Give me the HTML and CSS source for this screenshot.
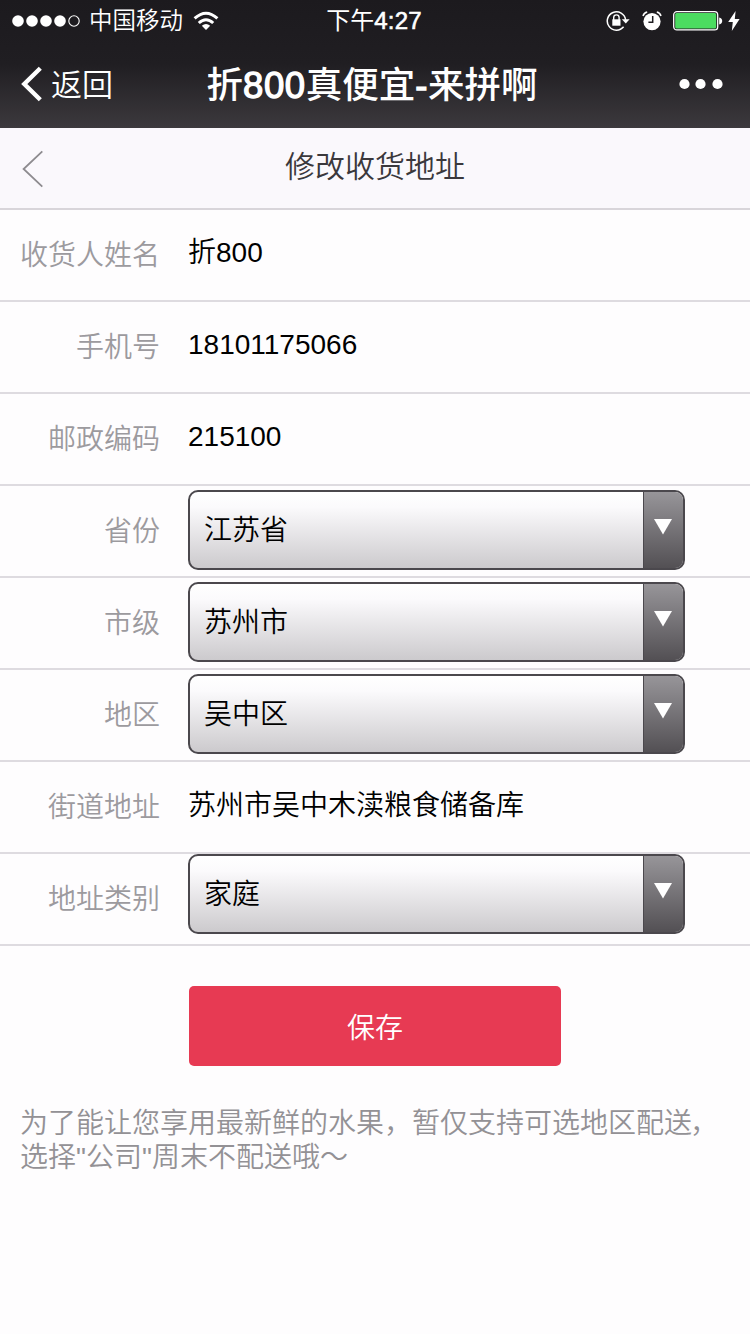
FILE: index.html
```html
<!DOCTYPE html>
<html lang="zh-CN">
<head>
<meta charset="utf-8">
<title>修改收货地址</title>
<link rel="stylesheet" href="styles.css">
</head>
<body>
<div class="top">
  <div class="status">
    <div class="carrier">
      <svg class="signal" width="68" height="14" viewBox="0 0 68 14">
        <g fill="#fff"><circle cx="6" cy="7" r="5.8"/><circle cx="20" cy="7" r="5.8"/><circle cx="34" cy="7" r="5.8"/><circle cx="48" cy="7" r="5.8"/></g>
        <circle cx="62" cy="7" r="5.2" fill="none" stroke="#fff" stroke-width="1.1"/>
      </svg>
      <span class="carrier-name">中国移动</span>
      <svg class="wifi" width="26" height="20" viewBox="0 0 26 20">
        <g fill="none" stroke="#fff" stroke-width="3"><path d="M1.6 7.4 Q13 -3 24.4 7.4"/><path d="M5.8 12 Q13 5.4 20.2 12"/></g>
        <path d="M13 19 L8.8 14.8 Q13 11.4 17.2 14.8Z" fill="#fff"/>
      </svg>
    </div>
    <div class="clock">下午<span class="clock-num">4:27</span></div>
    <div class="indicators">
      <svg width="24" height="22" viewBox="0 0 24 22">
        <path d="M19.6 9.8 A9.2 9.2 0 1 0 17.6 16.8" fill="none" stroke="#fff" stroke-width="1.5"/>
        <path d="M15.8 9.2h7.8l-3.8 4.4z" fill="#fff"/>
        <path d="M6.3 9.3h8.2v6.4H6.3z" fill="#fff"/>
        <path d="M7.7 10V7.6a2.7 2.7 0 0 1 5.4 0V10" fill="none" stroke="#fff" stroke-width="1.4"/>
      </svg>
      <svg class="alarm" width="20" height="20" viewBox="0 0 20 20">
        <circle cx="10" cy="10.6" r="8.6" fill="#fff"/>
        <path d="M1 5 Q2 1.8 5.2 1M19 5 Q18 1.8 14.8 1" fill="none" stroke="#fff" stroke-width="1.5"/>
        <path d="M10.7 5v6.2H6.4" fill="none" stroke="#1e1c20" stroke-width="1.5"/>
      </svg>
      <svg class="battery" width="50" height="20" viewBox="0 0 50 20">
        <rect x=".7" y=".7" width="44" height="18.2" rx="3.2" fill="none" stroke="#fff" stroke-width="1.3"/>
        <rect x="2.2" y="2.1" width="41" height="15.4" rx="1.5" fill="#4bdc60"/>
        <path d="M46.2 6.4q3 .6 3 3.5t-3 3.5z" fill="#fff"/>
      </svg>
      <svg class="bolt" width="12" height="20" viewBox="0 0 12 20"><path d="M7.6 0 L.2 11h4.6L3.8 20 11.6 8H6.8z" fill="#fff"/></svg>
    </div>
  </div>
  <div class="nav">
    <div class="back">
      <svg width="22" height="36" viewBox="0 0 22 36"><path d="M19.3 2.3 L3.3 18 L19.3 33.7" fill="none" stroke="#fff" stroke-width="4.4"/></svg>
      <span class="back-text">返回</span>
    </div>
    <div class="nav-title">折<span class="title-num">800</span>真便宜<span class="title-num">-</span>来拼啊</div>
    <svg class="more" width="44" height="12" viewBox="0 0 44 12" fill="#fff"><circle cx="5.5" cy="6" r="5.1"/><circle cx="21.5" cy="6" r="5.1"/><circle cx="38.5" cy="6" r="5.1"/></svg>
  </div>
</div>
<div class="heading">
  <svg class="heading-back" width="22" height="38" viewBox="0 0 22 38"><path d="M20.3 1.4 L1.6 19 L20.3 36.6" fill="none" stroke="#8d8b8f" stroke-width="1.8"/></svg>
  <h1 class="heading-title">修改收货地址</h1>
</div>
<div class="form">
  <div class="row"><div class="label">收货人姓名</div><div class="value">折800</div></div>
  <div class="row"><div class="label">手机号</div><div class="value">18101175066</div></div>
  <div class="row"><div class="label">邮政编码</div><div class="value">215100</div></div>
  <div class="row"><div class="label">省份</div><div class="select"><span class="select-text">江苏省</span><span class="select-arrow"><svg width="18" height="16" viewBox="0 0 18 16"><path d="M0 0h18L9 15.6z" fill="#fff"/></svg></span></div></div>
  <div class="row"><div class="label">市级</div><div class="select"><span class="select-text">苏州市</span><span class="select-arrow"><svg width="18" height="16" viewBox="0 0 18 16"><path d="M0 0h18L9 15.6z" fill="#fff"/></svg></span></div></div>
  <div class="row"><div class="label">地区</div><div class="select"><span class="select-text">吴中区</span><span class="select-arrow"><svg width="18" height="16" viewBox="0 0 18 16"><path d="M0 0h18L9 15.6z" fill="#fff"/></svg></span></div></div>
  <div class="row"><div class="label">街道地址</div><div class="value value-address">苏州市吴中木渎粮食储备库</div></div>
  <div class="row"><div class="label">地址类别</div><div class="select select-flush"><span class="select-text">家庭</span><span class="select-arrow"><svg width="18" height="16" viewBox="0 0 18 16"><path d="M0 0h18L9 15.6z" fill="#fff"/></svg></span></div></div>
</div>
<button class="save">保存</button>
<p class="note">为了能让您享用最新鲜的水果，暂仅支持可选地区配送<span class="comma">，</span><br>选择"公司"周末不配送哦～</p>
</body>
</html>
```
FILE: styles.css
```css
* { box-sizing: border-box; }
body {
  margin: 0;
  height: 1334px;
  overflow: hidden;
  background: #fefdfe;
  font-family: "Liberation Sans", "Noto Sans CJK SC", sans-serif;
  font-weight: 350;
  font-size: 28px;
  color: #000;
}
svg { display: block; flex: none; }
.top {
  height: 128px;
  color: #fff;
  background: linear-gradient(#1c1a1e 0, #201e22 50%, #3c393d 100%);
}
.status {
  height: 40px;
  display: grid;
  grid-template-columns: 1fr auto 1fr;
  align-items: center;
  padding: 0 10px 0 12px;
}
.carrier { display: flex; align-items: center; }
.carrier-name { margin-left: 9px; padding-top: 1px; font-size: 23.5px; line-height: 40px; }
.wifi { margin-left: 10px; }
.clock { padding: 1px 4px 0 0; font-size: 24px; font-weight: 400; line-height: 40px; }
.clock-num { font-weight: 400; font-size: 24px; letter-spacing: .2px; -webkit-text-stroke: .6px #fff; }
.indicators { display: flex; align-items: center; justify-content: flex-end; }
.alarm { margin-left: 12px; }
.battery { margin-left: 11px; }
.bolt { margin-left: 5px; }
.nav {
  height: 88px;
  display: grid;
  grid-template-columns: 1fr auto 1fr;
  align-items: center;
  padding: 0 27px 0 21px;
}
.back { display: flex; align-items: center; gap: 8px; font-size: 31px; }
.back-text { line-height: 44px; padding-top: 4px; }
.nav-title { padding-top: 3px; font-size: 36.5px; line-height: 85px; font-weight: 500; }
.title-num { font-weight: 400; letter-spacing: .6px; -webkit-text-stroke: 1.3px #fff; }
.more { justify-self: end; }
.heading {
  height: 82px;
  display: grid;
  grid-template-columns: 1fr auto 1fr;
  align-items: center;
  padding: 0 22px;
  background: #faf8fc;
  border-bottom: 2px solid #d8d5da;
}
.heading-back { margin-top: 2px; }
.heading-title { margin: 0; font-size: 30px; font-weight: 350; color: #3a383c; line-height: 78px; padding-bottom: 2px; }
.row {
  height: 92px;
  display: flex;
  align-items: flex-start;
  border-bottom: 2px solid #dedbe0;
}
.label {
  width: 160px;
  margin-right: 28px;
  text-align: right;
  line-height: 92px;
  height: 90px;
  color: #9c9a9e;
}
.value { line-height: 86px; }
.value-address { line-height: 88px; }
.select {
  width: 497px;
  height: 80px;
  margin-top: 4px;
  display: flex;
  border: 2px solid #4b484d;
  border-radius: 10px;
  overflow: hidden;
  background: linear-gradient(#fff 0, #fbfafc 20%, #cccacd 100%);
}
.select-flush { margin-top: 0; }
.select-text { flex: 1; padding-left: 14px; line-height: 78px; }
.select-arrow {
  width: 40px;
  padding: 27px 0 0 10px;
  border-left: 1px solid #4b484d;
  background: linear-gradient(#979599, #535054);
}
.save {
  display: block;
  width: 372px;
  height: 80px;
  margin: 40px auto 0;
  padding: 0;
  border: 0;
  border-radius: 5px;
  background: #e73a53;
  color: #fff;
  font: inherit;
}
.note { margin: 41px 0 0 20px; line-height: 34px; color: #939195; white-space: nowrap; }
.comma { margin-left: -2px; }
```
